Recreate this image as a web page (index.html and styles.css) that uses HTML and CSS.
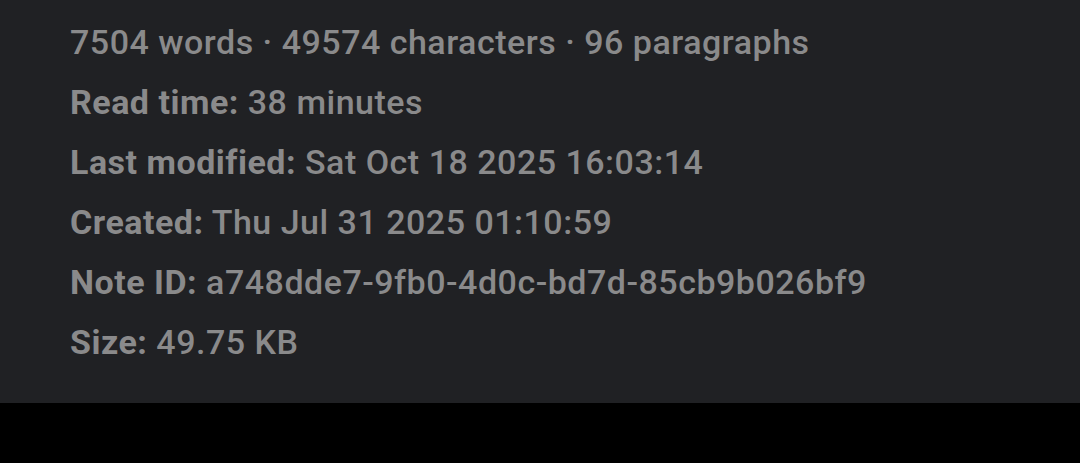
FILE: index.html
```html
<!DOCTYPE html>
<html>
<head>
<meta charset="utf-8">
<link rel="stylesheet" href="styles.css">
</head>
<body>
<div class="panel">
  <div class="row">7504 words · 49574 characters · 96 paragraphs</div>
  <div class="row"><b>Read time:</b> 38 minutes</div>
  <div class="row"><b>Last modified:</b> Sat Oct 18 2025 16:03:14</div>
  <div class="row"><b>Created:</b> Thu Jul 31 2025 01:10:59</div>
  <div class="row"><b>Note ID:</b> a748dde7-9fb0-4d0c-bd7d-85cb9b026bf9</div>
  <div class="row"><b>Size:</b> 49.75 KB</div>
</div>
</body>
</html>
```
FILE: styles.css
```css
html, body {
  margin: 0;
  padding: 0;
  background: #000;
}
.panel {
  background: #202124;
  height: 403px;
  box-sizing: border-box;
  padding: 12px 0 0 70px;
  font-family: Roboto, "Noto Sans", sans-serif;
  font-size: 34px;
  font-weight: 500;
  letter-spacing: 0.5px;
  color: #8a8a8b;
}
.row {
  line-height: 60px;
  height: 60px;
  white-space: nowrap;
}
.row b {
  font-weight: 700;
}
```
